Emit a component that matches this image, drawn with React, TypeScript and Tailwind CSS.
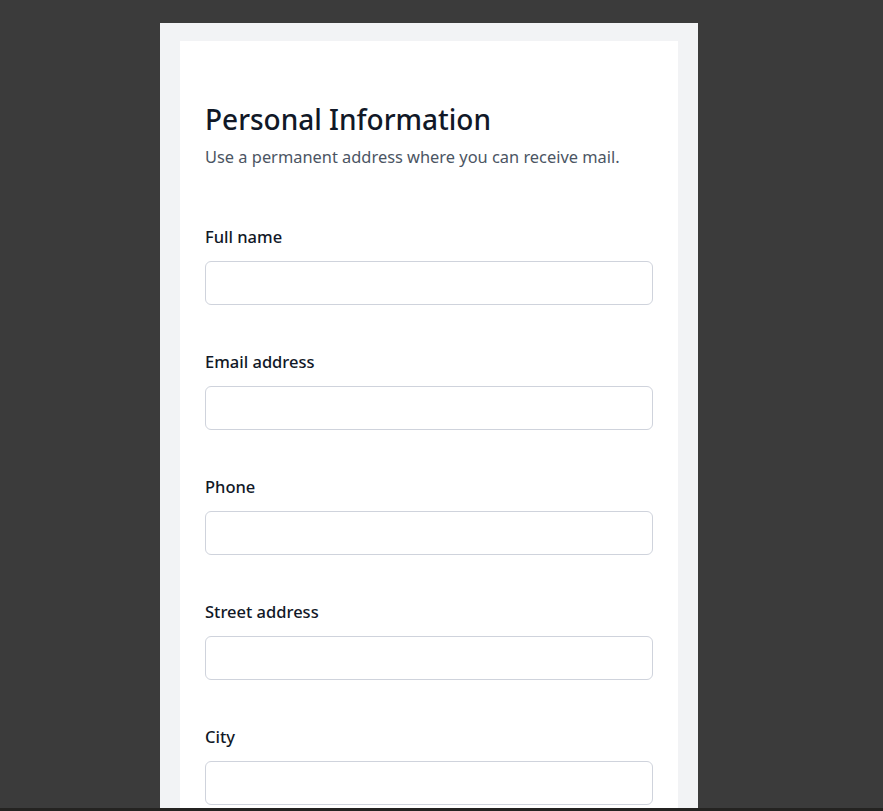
const fields = ['Full name', 'Email address', 'Phone', 'Street address', 'City'];

export default function App() {
  return (
    <div
      className="flex h-[811px] flex-col overflow-hidden bg-[#3b3b3b]"
      style={{ fontFamily: '"Noto Sans", "Open Sans", sans-serif' }}
    >
      <div className="min-h-0 flex-1 overflow-hidden pt-[23px]">
        <div className="ml-[160px] h-full w-[538px] bg-[#f2f3f5] px-5 pt-[18px]">
          <div className="h-full overflow-hidden bg-white px-[25px] pt-[58px]">
            <h1 className="text-[28px] font-medium leading-[40px] text-[#111827]">
              Personal Information
            </h1>
            <p className="mt-[6px] text-[16.4px] leading-6 text-[#4b5563]">
              Use a permanent address where you can receive mail.
            </p>
            <div className="mt-[56px] flex flex-col gap-[45px]">
              {fields.map((f) => (
                <div key={f}>
                  <label className="block text-[16.5px] font-medium leading-6 text-[#111827]">
                    {f}
                  </label>
                  <input
                    type="text"
                    className="mt-3 block h-11 w-full rounded-md border border-[#cfd3dc] bg-white px-3 outline-none"
                  />
                </div>
              ))}
            </div>
          </div>
        </div>
      </div>
      <div className="h-[3px] bg-[#242321]" />
    </div>
  );
}
